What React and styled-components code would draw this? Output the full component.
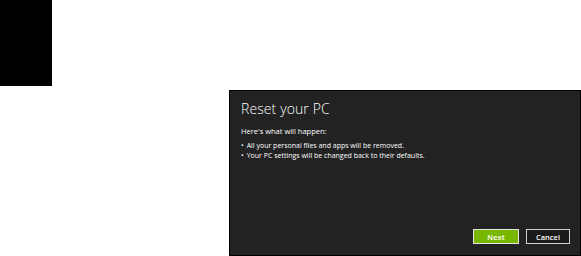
import styled, { createGlobalStyle } from "styled-components";

const GlobalStyle = createGlobalStyle`
	html, body {
		margin: 0;
		padding: 0;
		background: #ffffff;
		font-family: "Open Sans", "Liberation Sans", sans-serif;
	}
`;

const Page = styled.div`
	width: 581px;
	height: 256px;
	display: flex;
	flex-direction: column;
	overflow: hidden;
`;

const Corner = styled.div`
	width: 52px;
	height: 86px;
	background: #000000;
`;

const Dialog = styled.section`
	margin: 4px 0 0 229px;
	width: 352px;
	height: 166px;
	box-sizing: border-box;
	background: #222222;
	border: 1px solid #000000;
	padding: 9px 10px 11px 11px;
	display: flex;
	flex-direction: column;
	color: #ffffff;
`;

const Title = styled.h1`
	margin: 0;
	font-size: 14px;
	font-weight: 300;
	line-height: 18px;
	letter-spacing: 0.1px;
`;

const Lead = styled.p`
	margin: 8px 0 5px;
	font-size: 7.5px;
	line-height: 10px;
`;

const List = styled.ul`
	margin: 0;
	padding: 0;
	list-style: none;
	font-size: 7px;
	line-height: 10px;
`;

const Item = styled.li`
	&::before {
		content: "•";
		margin-right: 3px;
	}
`;

const Actions = styled.div`
	margin-top: auto;
	display: flex;
	justify-content: flex-end;
	gap: 7px;
`;

const Button = styled.button`
	width: ${(p) => p.$w}px;
	height: 15px;
	padding: 0;
	box-sizing: border-box;
	border: 1px solid ${(p) => (p.$primary ? "#e6e6e6" : "#cfcfcf")};
	background: ${(p) => (p.$primary ? "#7ab800" : "#1a1a1a")};
	color: #ffffff;
	font-family: "Open Sans", "Liberation Sans", sans-serif;
	font-size: 7.5px;
	font-weight: 600;
`;

export default function App() {
	return (
		<>
			<GlobalStyle />
			<Page>
				<Corner />
				<Dialog>
					<Title>Reset your PC</Title>
					<Lead>Here's what will happen:</Lead>
					<List>
						<Item>All your personal files and apps will be removed.</Item>
						<Item>Your PC settings will be changed back to their defaults.</Item>
					</List>
					<Actions>
						<Button $primary $w={46}>Next</Button>
						<Button $w={44}>Cancel</Button>
					</Actions>
				</Dialog>
			</Page>
		</>
	);
}
